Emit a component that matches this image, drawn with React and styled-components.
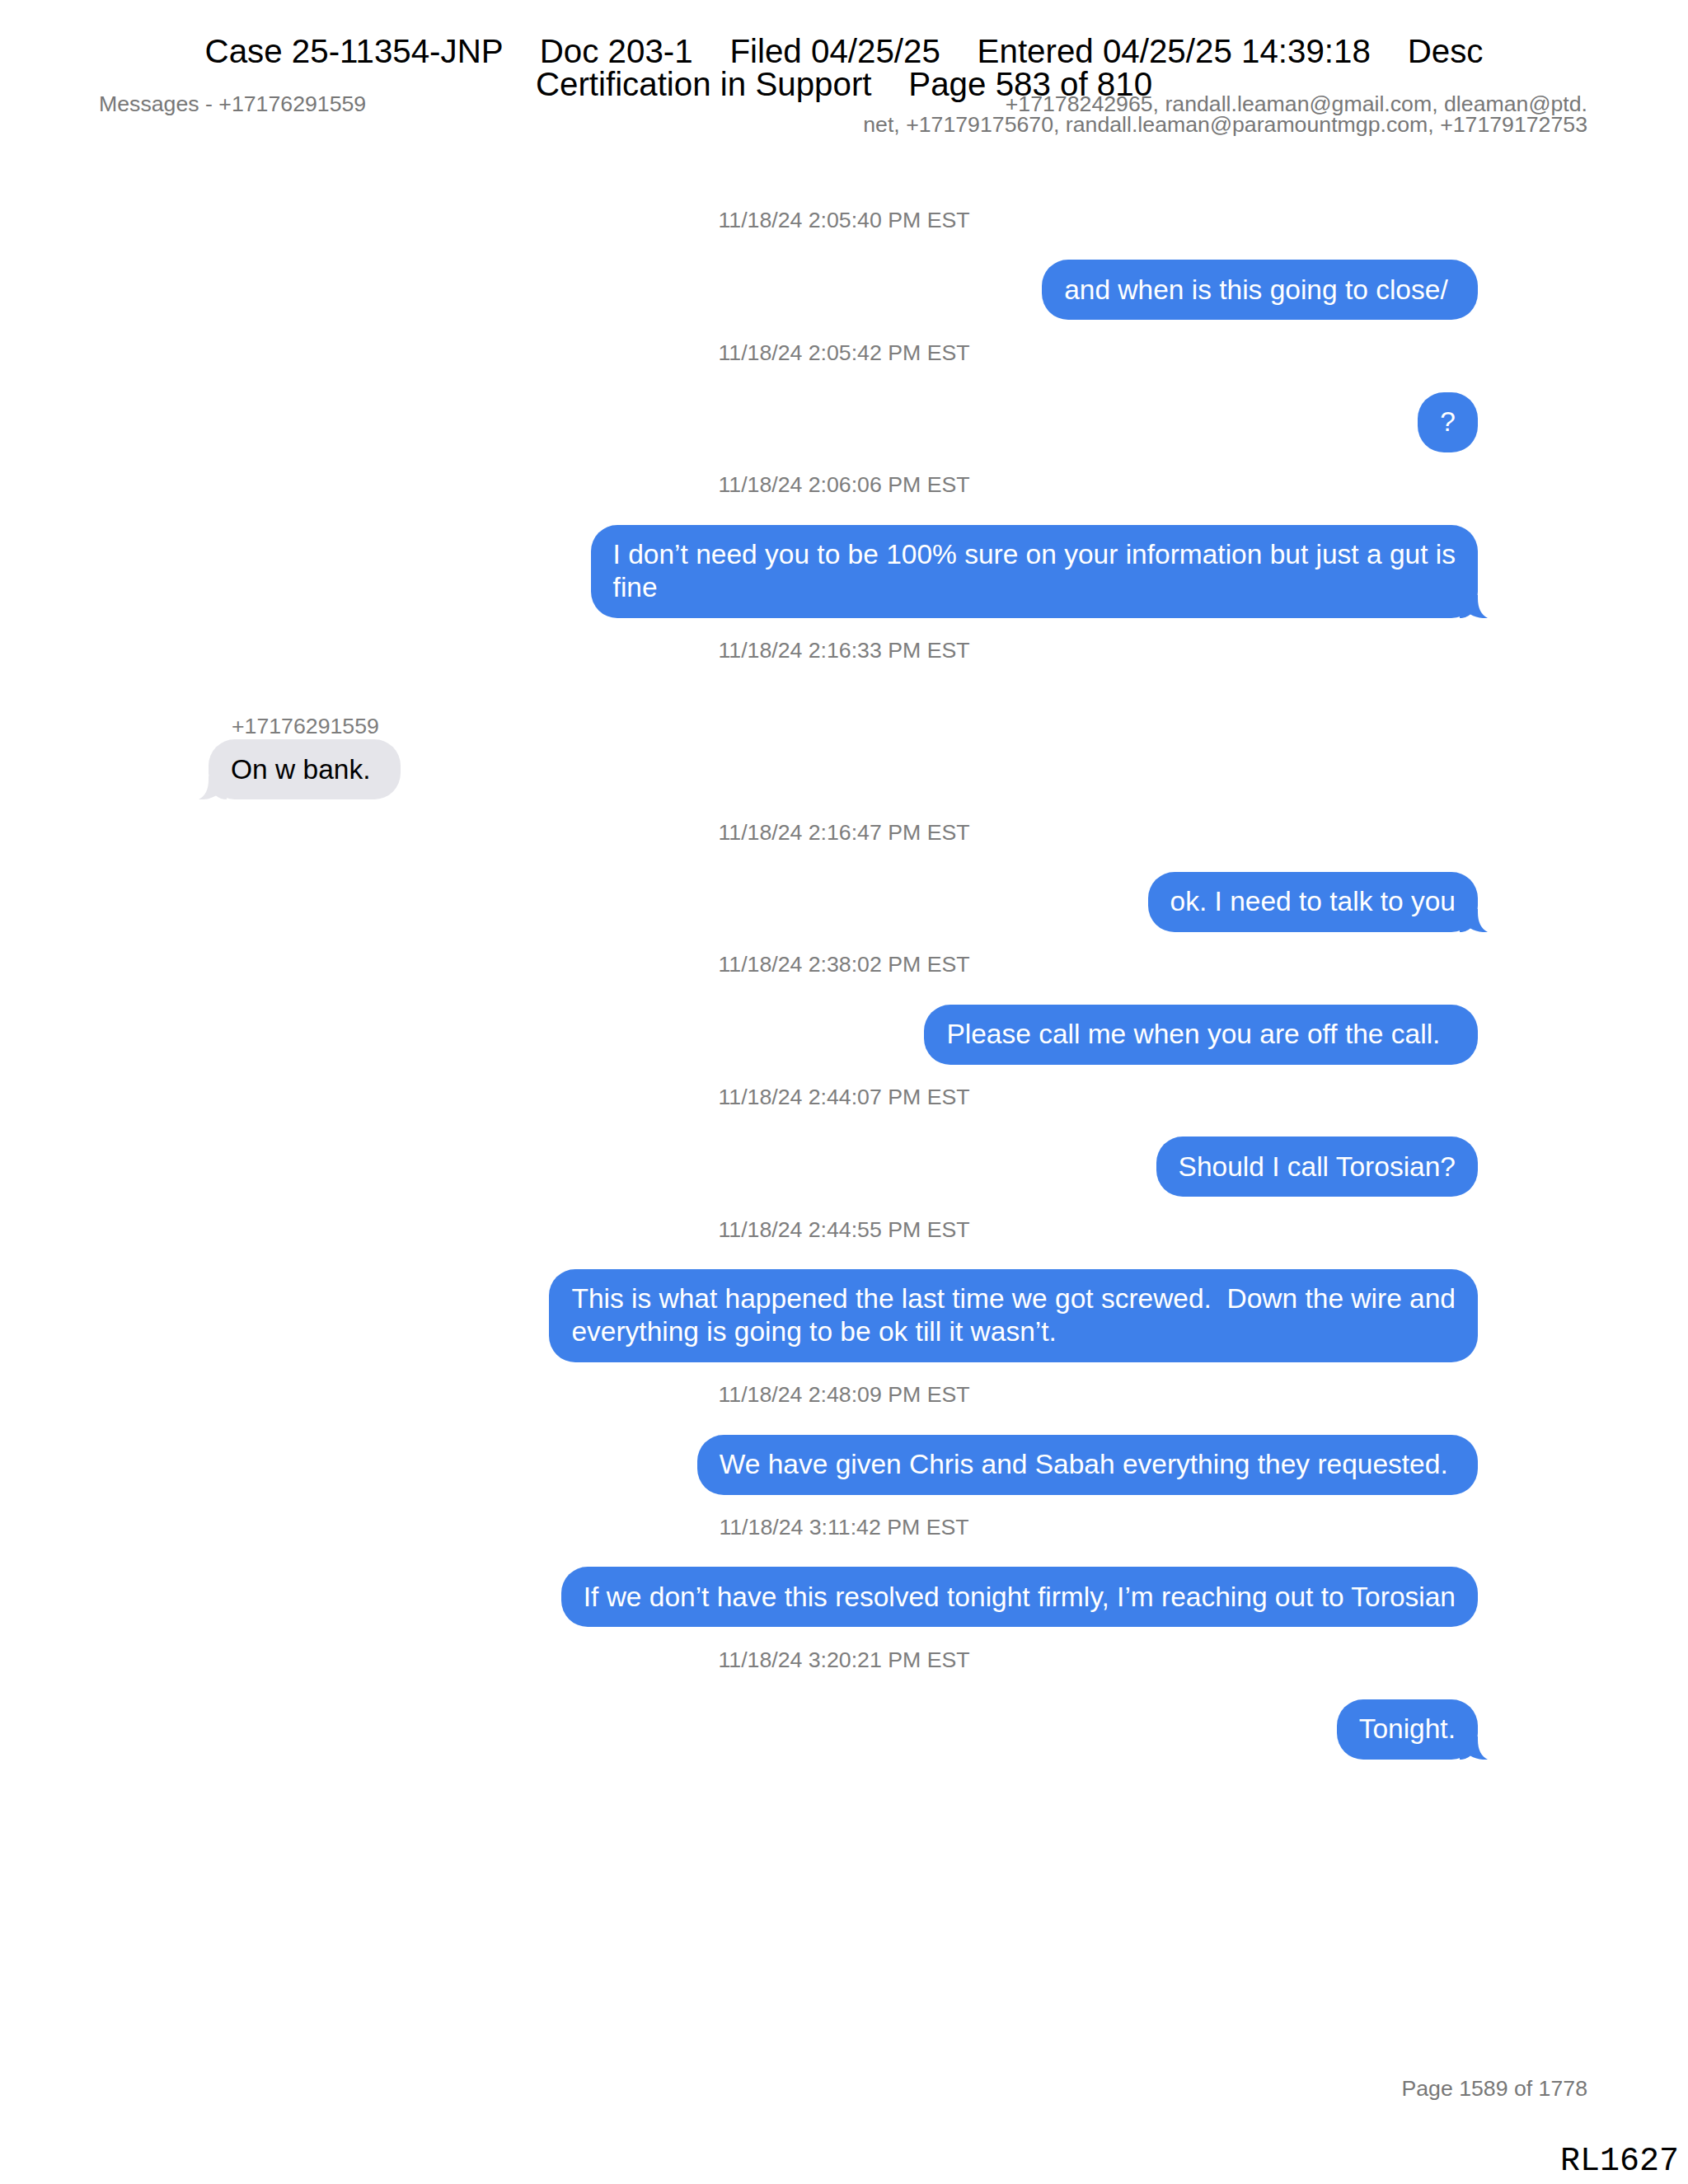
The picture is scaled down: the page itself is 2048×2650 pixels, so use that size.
import React from 'react';
import styled, { createGlobalStyle } from 'styled-components';

const GlobalStyle = createGlobalStyle`
  html, body { margin: 0; padding: 0; background: #ffffff; }
  body { font-family: "Liberation Sans", Arial, Helvetica, sans-serif; }
`;

const Page = styled.div`
  position: relative;
  width: 2048px;
  height: 2650px;
  display: flex;
  flex-direction: column;
  background: #ffffff;
  overflow: hidden;
`;

const CaseStamp = styled.div`
  position: absolute;
  top: 42.5px;
  left: 0;
  right: 0;
  text-align: center;
  font-size: 40.3px;
  line-height: 40px;
  color: #000000;
  white-space: pre;
  z-index: 2;
`;

const HeaderRow = styled.header`
  display: flex;
  justify-content: space-between;
  align-items: flex-start;
  padding: 113.5px 122px 0 120px;
  font-size: 26.7px;
  line-height: 25px;
  color: #777777;
`;

const Participants = styled.div`
  text-align: right;
  white-space: pre;
`;

const Thread = styled.main`
  display: flex;
  flex-direction: column;
  margin-top: 88.5px;
`;

const Timestamp = styled.div`
  text-align: center;
  font-size: 26.7px;
  line-height: 30px;
  color: #7d7d7d;
  margin-bottom: 33.3px;
`;

const SenderLabel = styled.div`
  font-size: 26.7px;
  line-height: 30px;
  color: #7d7d7d;
  margin: 28.5px 0 1.3px;
  padding-left: 281px;
`;

const BubbleRow = styled.div`
  display: flex;
  justify-content: ${p => (p.$incoming ? 'flex-start' : 'flex-end')};
  padding: ${p => (p.$incoming ? '0 0 0 253px' : '0 255px 0 0')};
  margin-bottom: 24.4px;
`;

const Bubble = styled.div`
  position: relative;
  padding: 16.5px 27px;
  border-radius: 32px;
  font-size: 33.5px;
  line-height: 40px;
  white-space: pre;
  background: ${p => (p.$incoming ? '#e5e5ea' : '#3e80ea')};
  color: ${p => (p.$incoming ? '#000000' : '#ffffff')};
`;

const TailSvg = styled.svg`
  position: absolute;
  bottom: 0;
  width: 34px;
  height: 28px;
  ${p => (p.$incoming ? 'left: -12px; transform: scaleX(-1);' : 'right: -12px;')}
`;

const Footer = styled.footer`
  margin-top: auto;
  display: flex;
  flex-direction: column;
  align-items: flex-end;
  padding: 0 11px 6.7px 0;
`;

const PageNumber = styled.div`
  font-size: 26.7px;
  line-height: 30px;
  color: #777777;
  margin-right: 111px;
  margin-bottom: 53.9px;
`;

const BatesStamp = styled.div`
  font-family: "Liberation Mono", "Courier New", monospace;
  font-size: 40px;
  line-height: 40px;
  color: #000000;
`;

const messages = [
  { ts: '11/18/24 2:05:40 PM EST', text: 'and when is this going to close/ ' },
  { ts: '11/18/24 2:05:42 PM EST', text: '?' },
  {
    ts: '11/18/24 2:06:06 PM EST',
    text: 'I don\u2019t need you to be 100% sure on your information but just a gut is\nfine',
    tail: true,
  },
  { ts: '11/18/24 2:16:33 PM EST', text: 'On w bank. ', incoming: true, sender: '+17176291559', tail: true },
  { ts: '11/18/24 2:16:47 PM EST', text: 'ok. I need to talk to you', tail: true },
  { ts: '11/18/24 2:38:02 PM EST', text: 'Please call me when you are off the call.  ' },
  { ts: '11/18/24 2:44:07 PM EST', text: 'Should I call Torosian?' },
  {
    ts: '11/18/24 2:44:55 PM EST',
    text: 'This is what happened the last time we got screwed.  Down the wire and\neverything is going to be ok till it wasn\u2019t.',
  },
  { ts: '11/18/24 2:48:09 PM EST', text: 'We have given Chris and Sabah everything they requested. ' },
  {
    ts: '11/18/24 3:11:42 PM EST',
    text: 'If we don\u2019t have this resolved tonight firmly, I\u2019m reaching out to Torosian',
  },
  { ts: '11/18/24 3:20:21 PM EST', text: 'Tonight.', tail: true },
];

function Tail({ incoming }) {
  return (
    <TailSvg $incoming={incoming} viewBox="0 0 34 28" aria-hidden="true">
      <path
        d="M0 0 H22 V4 C22 16 26 24 34 28 C27 28.6 19 27 13 23.5 C9 26.5 5 28 0 28 Z"
        fill={incoming ? '#e5e5ea' : '#3e80ea'}
      />
    </TailSvg>
  );
}

function Message({ m }) {
  return (
    <>
      <Timestamp>{m.ts}</Timestamp>
      {m.sender && <SenderLabel>{m.sender}</SenderLabel>}
      <BubbleRow $incoming={m.incoming}>
        <Bubble $incoming={m.incoming}>
          {m.text}
          {m.tail && <Tail incoming={m.incoming} />}
        </Bubble>
      </BubbleRow>
    </>
  );
}

export default function App() {
  return (
    <>
      <GlobalStyle />
      <Page>
        <CaseStamp>
          {'Case 25-11354-JNP    Doc 203-1    Filed 04/25/25    Entered 04/25/25 14:39:18    Desc\nCertification in Support    Page 583 of 810'}
        </CaseStamp>
        <HeaderRow>
          <div>Messages - +17176291559</div>
          <Participants>
            {'+17178242965, randall.leaman@gmail.com, dleaman@ptd.\nnet, +17179175670, randall.leaman@paramountmgp.com, +17179172753'}
          </Participants>
        </HeaderRow>
        <Thread>
          {messages.map((m, i) => (
            <Message key={i} m={m} />
          ))}
        </Thread>
        <Footer>
          <PageNumber>Page 1589 of 1778</PageNumber>
          <BatesStamp>RL1627</BatesStamp>
        </Footer>
      </Page>
    </>
  );
}
